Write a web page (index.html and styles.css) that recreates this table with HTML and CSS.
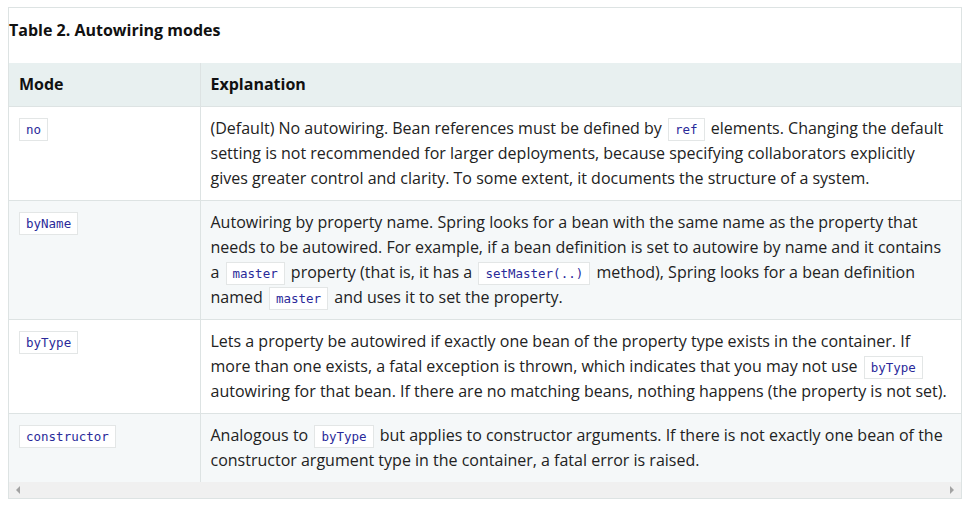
FILE: index.html
```html
<!DOCTYPE html>
<html lang="en">
<head>
<meta charset="utf-8">
<title>Autowiring modes</title>
<link rel="stylesheet" href="styles.css">
</head>
<body>
<div class="block">
  <div class="caption">Table 2. Autowiring modes</div>
  <table class="modes">
    <colgroup>
      <col class="c-mode">
      <col class="c-expl">
    </colgroup>
    <thead>
      <tr><th>Mode</th><th>Explanation</th></tr>
    </thead>
    <tbody>
      <tr>
        <td><code>no</code></td>
        <td>(Default) No autowiring. Bean references must be defined by <code>ref</code> elements. Changing the default setting is not recommended for larger deployments, because specifying collaborators explicitly gives greater control and clarity. To some extent, it documents the structure of a system.</td>
      </tr>
      <tr>
        <td><code>byName</code></td>
        <td>Autowiring by property name. Spring looks for a bean with the same name as the property that needs to be autowired. For example, if a bean definition is set to autowire by name and it contains a <code>master</code> property (that is, it has a <code>setMaster(..)</code> method), Spring looks for a bean definition named <code>master</code> and uses it to set the property.</td>
      </tr>
      <tr>
        <td><code>byType</code></td>
        <td>Lets a property be autowired if exactly one bean of the property type exists in the container. If more than one exists, a fatal exception is thrown, which indicates that you may not use <code>byType</code> autowiring for that bean. If there are no matching beans, nothing happens (the property is not set).</td>
      </tr>
      <tr>
        <td><code>constructor</code></td>
        <td>Analogous to <code>byType</code> but applies to constructor arguments. If there is not exactly one bean of the constructor argument type in the container, a fatal error is raised.</td>
      </tr>
    </tbody>
  </table>
  <div class="hscroll">
    <span class="arrow arrow-left"></span>
    <span class="arrow arrow-right"></span>
  </div>
</div>
</body>
</html>
```

FILE: styles.css
```css
html, body {
  background: #ffffff;
}
body {
  margin: 7px 8px;
  font-family: "Open Sans", "Noto Sans", sans-serif;
  color: #222222;
}
.block {
  width: 952px;
  border: 1px solid #dde3e3;
}
.caption {
  font-weight: 700;
  font-size: 16px;
  line-height: 22px;
  color: #111111;
  padding: 11px 0 22px 0;
}
.modes {
  border-collapse: collapse;
  width: 953px;
  table-layout: fixed;
  font-size: 16px;
  line-height: 25px;
}
.c-mode { width: 191px; }
.modes th,
.modes td {
  text-align: left;
  vertical-align: top;
  padding: 9px 10px 9px 10px;
  border-top: 1px solid #dde3e3;
  border-right: 1px solid #dde3e3;
}
.modes thead th {
  background: #e8f0f0;
  font-weight: 700;
  color: #111111;
  border-top: none;
}
.modes tbody tr:nth-child(even) td {
  background: #f5f8f9;
}
.modes code {
  font-family: "DejaVu Sans Mono", monospace;
  font-size: 12.5px;
  color: #2a2a9a;
  background: #ffffff;
  border: 1px solid #e3e6e6;
  padding: 3px 6px;
  margin: 0 2px;
  line-height: 14px;
}
.modes td:first-child code {
  margin: 0;
}
.hscroll {
  height: 16px;
  background: #f0f0f0;
  display: flex;
  justify-content: space-between;
  align-items: center;
  padding: 0 7px 0 7px;
}
.arrow {
  width: 0;
  height: 0;
  border-top: 4px solid transparent;
  border-bottom: 4px solid transparent;
}
.arrow-left {
  border-right: 4px solid #a3a3a3;
}
.arrow-right {
  border-left: 4px solid #a3a3a3;
}
```
